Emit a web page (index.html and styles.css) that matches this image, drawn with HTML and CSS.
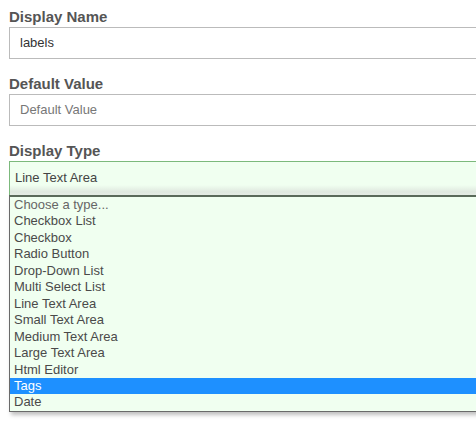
FILE: index.html
```html
<!DOCTYPE html>
<html>
<head>
<meta charset="utf-8">
<link rel="stylesheet" href="styles.css">
</head>
<body>
<div class="form">
  <div class="field">
    <div class="label">Display Name</div>
    <div class="input">labels</div>
  </div>
  <div class="field">
    <div class="label">Default Value</div>
    <div class="input placeholder">Default Value</div>
  </div>
  <div class="field">
    <div class="label">Display Type</div>
    <div class="select">Line Text Area</div>
    <ul class="options">
      <li class="muted">Choose a type...</li>
      <li>Checkbox List</li>
      <li>Checkbox</li>
      <li>Radio Button</li>
      <li>Drop-Down List</li>
      <li>Multi Select List</li>
      <li>Line Text Area</li>
      <li>Small Text Area</li>
      <li>Medium Text Area</li>
      <li>Large Text Area</li>
      <li>Html Editor</li>
      <li class="selected">Tags</li>
      <li>Date</li>
    </ul>
  </div>
</div>
</body>
</html>
```
FILE: styles.css
```css
html, body {
  margin: 0;
  padding: 0;
  background: #fff;
  overflow: hidden;
  width: 476px;
  height: 426px;
}
.form {
  padding: 7px 0 0 9px;
  font-family: "Liberation Sans", Arial, sans-serif;
  width: 480px;
}
.field {
  margin-bottom: 15px;
}
.label {
  font-weight: bold;
  font-size: 15px;
  color: #555;
  line-height: 20px;
}
.input {
  box-sizing: border-box;
  height: 32px;
  border: 1px solid #bbb;
  padding: 0 10px;
  font-size: 13px;
  line-height: 30px;
  color: #333;
}
.input.placeholder {
  color: #777;
}
.select {
  box-sizing: border-box;
  height: 34px;
  border: 1px solid #7cb97c;
  border-bottom: none;
  background: linear-gradient(#f0fff0 0, #f0fff0 23px, #dfe8df 30px, #e8f0e8 33px);
  padding: 0 5px;
  font-size: 13px;
  line-height: 32px;
  color: #444;
}
.options {
  list-style: none;
  margin: 0;
  padding: 0;
  border: 1px solid #6a6a6a;
  border-top: 2px solid #5a6a5a;
  background: #f0fff0;
  box-shadow: 2px 3px 4px rgba(0,0,0,0.25);
}
.options li {
  font-size: 13px;
  line-height: 16.46px;
  height: 16.46px;
  padding: 0 4px;
  color: #4a4a4a;
}
.options li.muted {
  color: #666;
}
.options li.selected {
  background: #1e90ff;
  color: #fff;
}
```
